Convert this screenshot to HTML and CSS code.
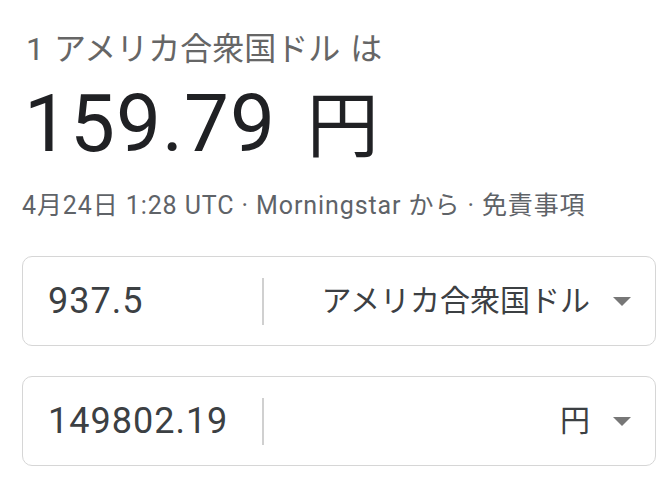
FILE: index.html
```html
<!DOCTYPE html>
<html lang="ja">
<head>
<meta charset="utf-8">
<link rel="stylesheet" href="styles.css">
</head>
<body>
<div class="card">
  <div class="title">1 アメリカ合衆国ドル は</div>
  <div class="rate">159.79 <span class="yen">円</span></div>
  <div class="meta">4月24日 1:28 UTC · Morningstar から · 免責事項</div>
  <div class="box">
    <div class="amount">937.5</div>
    <div class="divider"></div>
    <div class="unit">アメリカ合衆国ドル</div>
    <svg class="arrow" width="18" height="9" viewBox="0 0 18 9"><path d="M0 0 L18 0 L9 9 Z" fill="#777"/></svg>
  </div>
  <div class="box box2">
    <div class="amount">149802.19</div>
    <div class="divider"></div>
    <div class="unit">円</div>
    <svg class="arrow" width="18" height="9" viewBox="0 0 18 9"><path d="M0 0 L18 0 L9 9 Z" fill="#777"/></svg>
  </div>
</div>
</body>
</html>
```
FILE: styles.css
```css
html, body {
  margin: 0;
  padding: 0;
  background: #fff;
}
.card {
  padding: 29px 9px 0 22px;
  font-family: Roboto, "Noto Sans CJK JP", sans-serif;
}
.title {
  font-size: 32px;
  line-height: 40px;
  height: 40px;
  color: #666;
  padding-left: 4px;
  word-spacing: 2px;
}
.rate {
  margin-top: 15px;
  font-size: 80px;
  line-height: 80px;
  height: 80px;
  color: #202124;
  padding-left: 2px;
  letter-spacing: 1px;
  word-spacing: 10px;
}
.yen {
  font-size: 72px;
  line-height: 1;
  letter-spacing: 0;
}
.meta {
  margin-top: 27px;
  font-size: 25px;
  line-height: 30px;
  height: 30px;
  color: #5f6368;
  letter-spacing: 0.9px;
}
.box {
  margin-top: 35px;
  height: 88px;
  border: 1px solid #d6d6d6;
  border-radius: 10px;
  display: flex;
  align-items: center;
  padding: 0 24px 0 0;
}
.box2 {
  margin-top: 30px;
}
.amount {
  width: 214px;
  padding-left: 25px;
  font-size: 36px;
  line-height: 44px;
  color: #3c4043;
  letter-spacing: 1px;
}
.divider {
  width: 2px;
  height: 47px;
  background: #d0d0d0;
}
.unit {
  flex: 1;
  text-align: right;
  font-size: 30px;
  line-height: 40px;
  color: #3c4043;
  margin-right: 23px;
}
.arrow {
  display: block;
  flex: none;
}
```
